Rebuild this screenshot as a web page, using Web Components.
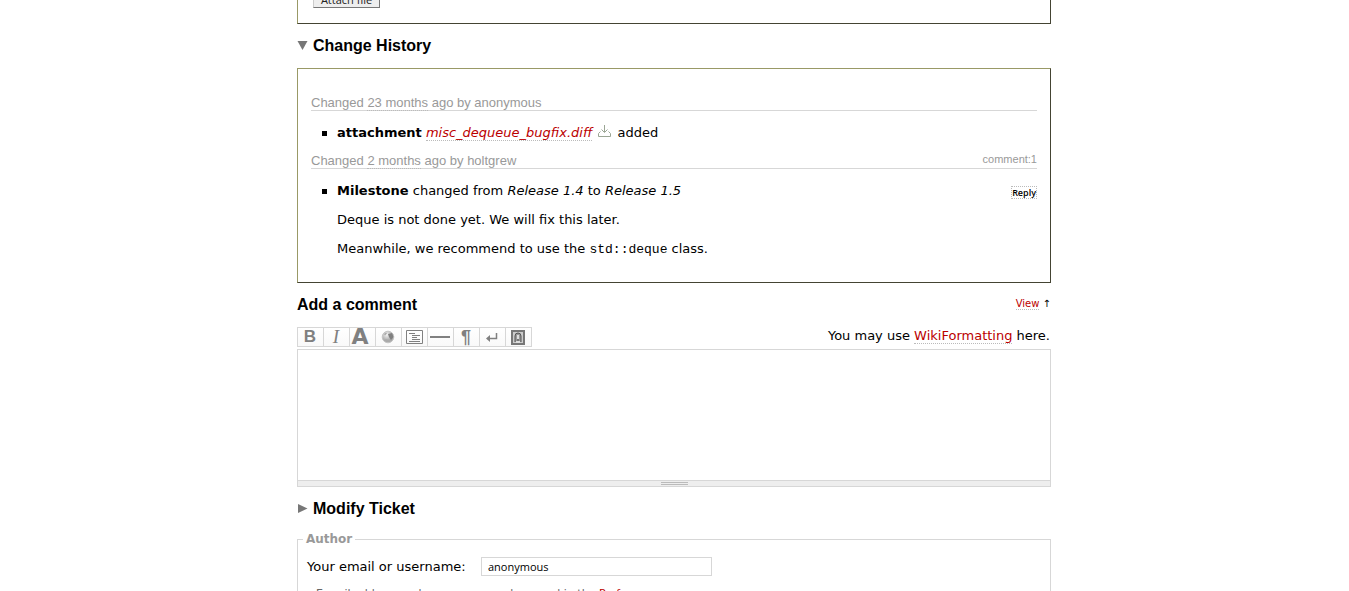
<!DOCTYPE html>
<html lang="en">
<head>
<meta charset="utf-8">
<title>Ticket</title>
<style>
html { overflow: hidden; }
body { margin: 0; background: #fff; color: #000; font: 13px/18px "DejaVu Sans", Verdana, sans-serif; }
</style>
</head>
<body>
<ticket-page></ticket-page>
<script>
const define = (name, html) => {
  const tpl = document.createElement('template');
  tpl.innerHTML = html;
  customElements.define(name, class extends HTMLElement {
    constructor() {
      super();
      this.attachShadow({ mode: 'open' }).append(tpl.content.cloneNode(true));
    }
  });
};

/* Section title, with an optional fold triangle: fold="open" or fold="closed" */
define('section-title', `
<style>
:host { display: flex; align-items: center; padding: 12px 0; gap: 5px; }
h2 { margin: 0; font: bold 16px/20px "Liberation Sans", Arial, sans-serif; }
svg { display: none; width: 11px; height: 11px; fill: #777; }
:host([fold="open"]) .open, :host([fold="closed"]) .closed { display: block; }
.end { margin-left: auto; padding-bottom: 2px; font-size: 10px; line-height: 18px; }
</style>
<svg class="open" viewBox="0 0 11 11"><path d="M0.500 0h10L5.500 9z"/></svg>
<svg class="closed" viewBox="0 0 11 11"><path d="M1 0v9l9.500-4.500z"/></svg>
<h2><slot></slot></h2><span class="end"><slot name="end"></slot></span>`);

define('dotted-link', `
<style>
:host { display: inline; }
a { color: #b00; text-decoration: none; border-bottom: 1px dotted #bbb; }
:host([muted]) a { color: inherit; }
</style><a href="#"><slot></slot></a>`);

define('ticket-frame', `
<style>
:host { display: block; border: 1px solid; border-color: #996 #443 #443 #996; padding: 26px 13px 24px; }
</style><slot></slot>`);

define('change-entry', `
<style>
:host { display: block; }
header { display: flex; justify-content: space-between; border-bottom: 1px solid #d7d7d7; color: #999;
  font: 13px/15px "Liberation Sans", Arial, sans-serif; }
h3 { margin: 0; font: inherit; }
.ref { font-size: 11px; line-height: 13px; }
.body { display: flex; align-items: flex-start; justify-content: space-between; }
ul { list-style: none; margin: 0; padding: 13px 0 11px 26px; }
li { display: flex; align-items: center; margin-left: -15px; gap: 10px; }
li::before { content: ""; width: 5px; height: 5px; background: #000; }
</style>
<header><h3><slot name="title"></slot></h3><span class="ref"><slot name="ref"></slot></span></header>
<div class="body"><ul><li><span><slot></slot></span></li></ul><slot name="action"></slot></div>`);

define('reply-button', `
<style>
:host { display: block; padding-top: 17px; }
button { display: block; margin: 0; padding: 0; border: 1px dotted #bbb; background: #fff; color: #000; font: 600 9px/11px "Open Sans", sans-serif; }
</style><button type="button">Reply</button>`);

define('download-icon', `
<style>:host { display: inline-block; width: 13px; height: 12px; margin: 0 2px; } svg { display: block; }</style>
<svg width="13" height="12" viewBox="0 0 13 12" fill="none" stroke="#9aa594"><path d="M6.500 0v7M3.500 4.500l3 3 3-3M2.500 6.500L.5 8.500v3h12v-3l-2-2"/></svg>`);

define('wiki-toolbar', `
<style>
:host { display: flex; border: 1px solid #d7d7d7; border-left: 0; }
button { display: flex; align-items: center; justify-content: center; box-sizing: border-box; width: 26px; height: 18px; margin: 0; padding: 0 1px 0 0; border: 0; border-left: 1px solid #d7d7d7;
  background: linear-gradient(#fff, #f9f9f9); color: #808080; font: 17px/18px "Liberation Sans", Arial, sans-serif; overflow: hidden; }
.b { font-weight: bold; }
.i { font: italic 19px/18px "Liberation Serif", serif; }
.a { font: bold 22px/18px "DejaVu Sans", sans-serif; padding: 0 5px 0 0; }
.p { font-size: 18px; font-weight: bold; }
svg { display: block; fill: none; stroke: #808080; }
</style>
<button type="button" class="b" title="Bold text">B</button>
<button type="button" class="i" title="Italic text">I</button>
<button type="button" class="a" title="Heading">A</button>
<button type="button" title="Link"><svg width="14" height="14" viewBox="0 0 14 14"><defs><radialGradient id="g" cx=".4" cy=".3"><stop offset="0" stop-color="#f4f4f4"/><stop offset="1" stop-color="#aaa"/></radialGradient></defs><circle cx="7" cy="7" r="5.800" fill="url(#g)" stroke="#c4c4c4"/><path d="M7 4l4-1 1.500 4-2.500 3-2-3z" fill="#808080" stroke="none"/><path d="M3 4l2-1.500 1 1-2 2zM4 9l4 1-2 2z" fill="#aaa" stroke="none"/></svg></button>
<button type="button" title="Code block"><svg width="17" height="14" viewBox="0 0 17 14"><path d="M.5.5h16v13H.5zM3 3.500h6M6 5.500h8M6 7.500h5M6 9.500h8M3 11.500h11"/></svg></button>
<button type="button" title="Horizontal rule"><svg width="20" height="2" viewBox="0 0 20 2"><path d="M0 1h20" stroke-width="2"/></svg></button>
<button type="button" class="p" title="New paragraph">¶</button>
<button type="button" title="Line break"><svg width="12" height="9" viewBox="0 0 12 9"><path d="M10.500 0v5.500H3" stroke-width="1.500"/><path d="M0 5.500L4 2v7z" fill="#808080" stroke="none"/></svg></button>
<button type="button" title="Image"><svg width="14" height="15" viewBox="0 0 14 15"><path d="M1 1h12v13H1z" fill="#ccc" stroke="#777" stroke-width="2"/><path d="M4 12V6q0-3 3-3t3 3v6" fill="#999" stroke="#555"/><path d="M6 5h2v4H6zM5 11h4v2H5z" fill="#ddd" stroke="none"/><path d="M7 9v2" stroke="#555"/></svg></button>`);

define('comment-editor', `
<style>
:host { display: block; }
.bar { display: flex; justify-content: space-between; height: 20px; padding-right: 1px; margin-bottom: 2px; }
textarea { display: block; box-sizing: border-box; width: 100%; height: 131px; margin: 0; padding: 3px; border: 1px solid #d7d7d7; border-bottom: 0; resize: none; outline: 0; font: 13px/18px "Liberation Mono", monospace; }
.grip { display: flex; align-items: center; justify-content: center; height: 5px; border: 1px solid #d7d7d7; background: #eee; }
.grip i { width: 27px; height: 1px; border: solid #bbb; border-width: 1px 0; }
</style>
<div class="bar"><wiki-toolbar></wiki-toolbar><span>You may use <dotted-link>WikiFormatting</dotted-link> here.</span></div>
<textarea aria-label="Add a comment"></textarea><div class="grip"><i></i></div>`);

define('author-fields', `
<style>
:host { display: block; }
fieldset { margin: 0; min-width: 0; border: 1px solid #d7d7d7; padding: 10px 9px 16px; }
legend { margin-left: -4px; padding: 0 3px; color: #999; font: bold 12px/16px "DejaVu Sans", Verdana, sans-serif; }
.row { display: flex; align-items: center; }
label { min-width: 174px; }
input { box-sizing: border-box; width: 231px; height: 19px; margin: 0; padding: 0 6px; border: 1px solid #d7d7d7; font: 11px/17px "Open Sans", sans-serif; color: #000; }
p { margin: 9px 0 0 9px; color: #666; font-size: 11px; line-height: 18px; }
</style>
<fieldset><legend>Author</legend>
<div class="row"><label for="author">Your email or username:</label><input id="author" type="text" value="anonymous"></div>
<p>E-mail address and user name can be saved in the <dotted-link>Preferences</dotted-link>.</p></fieldset>`);

define('attach-form', `
<style>
:host { display: block; margin-top: -12px; border: 1px solid; border-color: #996 #443 #443 #996; padding: 0 15px 15px; }
button { display: block; box-sizing: border-box; height: 19px; width: 67px; padding: 2px 0 0; margin: 0; border: 1px solid; border-color: #ccc #777 #777 #ccc; background: #eee; color: #222; font: 11px/15px "Open Sans", sans-serif; }
</style><button type="button">Attach file</button>`);

define('ticket-page', `
<style>
:host { display: block; box-sizing: border-box; max-width: 755px; margin: 0 auto; padding-right: 1px; }
b { font-weight: bold; }
p { margin: 0 0 11px 26px; }
p:last-child { margin-bottom: 0; }
code { font: 13px/16px "Liberation Mono", monospace; }
</style>
<main>
<attach-form></attach-form>
<section-title fold="open">Change History</section-title>
<ticket-frame>
<change-entry><span slot="title">Changed <dotted-link muted>23 months</dotted-link> ago by anonymous</span>
<b>attachment</b> <dotted-link><em>misc_dequeue_bugfix.diff</em></dotted-link> <download-icon></download-icon> added</change-entry>
<change-entry><span slot="title">Changed <dotted-link muted>2 months</dotted-link> ago by holtgrew</span><span slot="ref">comment:1</span>
<b>Milestone</b> changed from <em>Release 1.4</em> to <em>Release 1.5</em><reply-button slot="action"></reply-button></change-entry>
<p>Deque is not done yet. We will fix this later.</p>
<p>Meanwhile, we recommend to use the <code>std::deque</code> class.</p>
</ticket-frame>
<section-title>Add a comment<span slot="end"><dotted-link>View</dotted-link> ↑</span></section-title>
<comment-editor></comment-editor>
<section-title fold="closed">Modify Ticket</section-title>
<author-fields></author-fields>
</main>`);
</script>
</body>
</html>
